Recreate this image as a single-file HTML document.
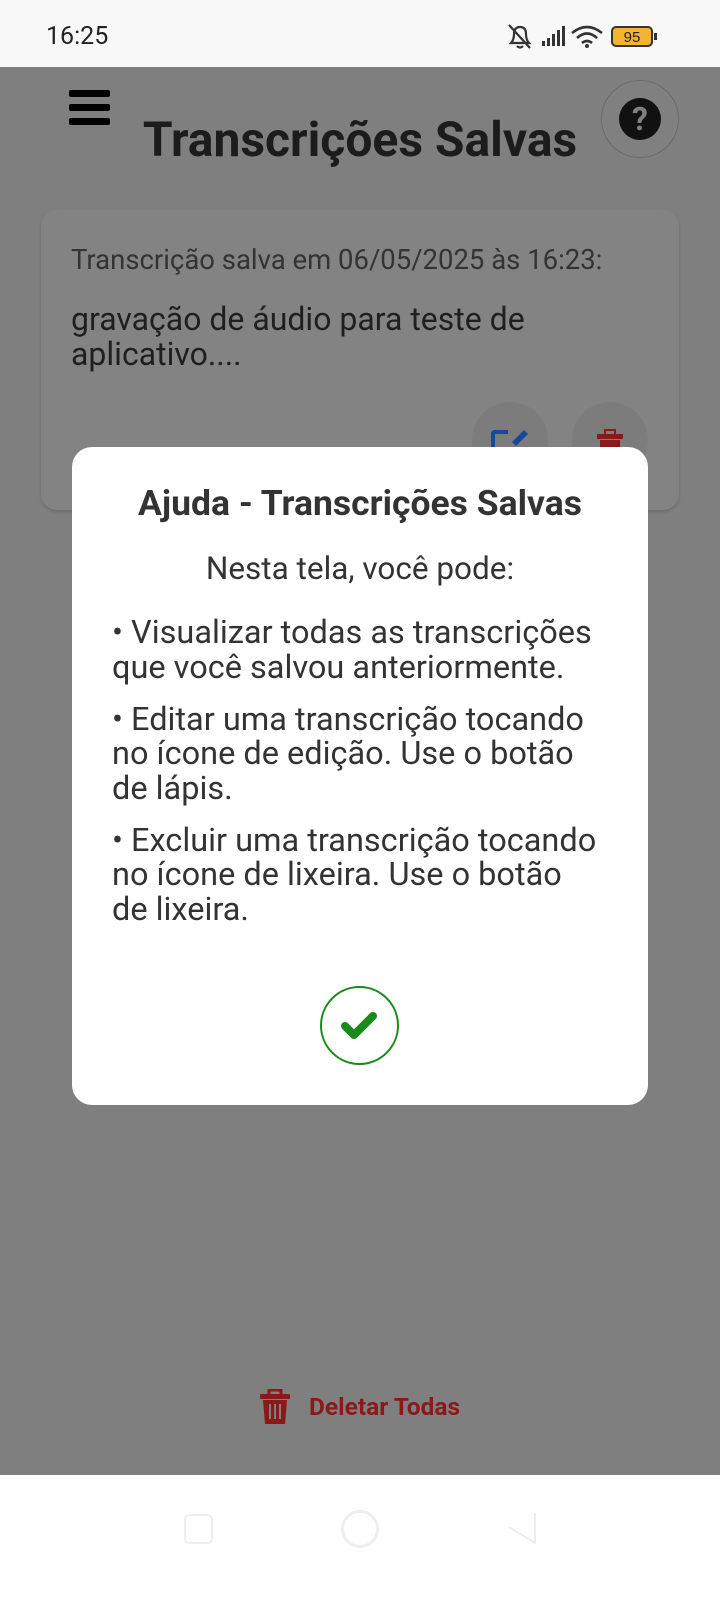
<!DOCTYPE html>
<html><head><meta charset="utf-8"><style>
*{margin:0;padding:0;box-sizing:border-box}
body{width:720px;height:1600px;position:relative;overflow:hidden;background:#7f7f7f;font-family:"Roboto","Liberation Sans",sans-serif;color:#222}
.abs{position:absolute}
.sb{left:0;top:0;width:720px;height:67px;background:#f8f8f8}
.nav{left:0;top:1475px;width:720px;height:125px;background:#fff}
</style></head><body>
<div class="abs sb">
 <div class="abs" style="left:46px;top:22px;font-size:25px;color:#222">16:25</div>
 <svg class="abs" style="left:506px;top:22px" width="170" height="30" viewBox="0 0 170 30">
  <g fill="none" stroke="#333" stroke-width="2.2"><path d="M5 21 Q8 18 8 12 Q8 5 14 5 Q20 5 20 12 Q20 18 23 21 Z"/><path d="M3 3 L24 26"/><path d="M11 24 Q14 27 17 24"/></g>
  <g fill="#333"><rect x="36" y="19" width="3" height="5"/><rect x="41" y="16" width="3" height="8"/><rect x="46" y="12" width="3" height="12"/><rect x="51" y="8" width="3" height="16"/><rect x="56" y="4" width="3" height="20"/></g>
  <g fill="none" stroke="#333" stroke-width="2.6"><path d="M66 11 Q81 -1 96 11"/><path d="M71 16 Q81 7 91 16"/><path d="M76 21 Q81 17 86 21"/></g>
  <circle cx="81" cy="24" r="2" fill="#333"/>
  <rect x="106" y="5" width="40" height="19" rx="4" fill="#f2b530" stroke="#333" stroke-width="2"/>
  <rect x="148" y="11" width="3" height="7" fill="#333"/>
  <text x="126" y="20" font-size="15" text-anchor="middle" fill="#222" font-family="Liberation Sans">95</text>
 </svg>
</div>
<div class="abs" style="left:69px;top:90px;width:41px;height:7px;background:#000;border-radius:2px"></div>
<div class="abs" style="left:69px;top:104px;width:41px;height:7px;background:#000;border-radius:2px"></div>
<div class="abs" style="left:69px;top:118px;width:41px;height:7px;background:#000;border-radius:2px"></div>
<div class="abs" style="left:0;width:720px;top:114px;line-height:52px;text-align:center;font-size:48px;font-weight:bold;color:#1c1c1c">Transcrições Salvas</div>
<div class="abs" style="left:601px;top:80px;width:78px;height:78px;border-radius:50%;border:1.5px solid #6a6a6a;background:#808080"></div>
<div class="abs" style="left:619px;top:98px;width:42px;height:42px;border-radius:50%;background:#111;color:#808080;font-size:32px;font-weight:bold;text-align:center;line-height:42px">?</div>
<div class="abs" style="left:41px;top:210px;width:638px;height:300px;border-radius:16px;background:#838383;box-shadow:0 2px 3px rgba(0,0,0,.15)"></div>
<div class="abs" style="left:71px;top:244px;line-height:32px;font-size:27.5px;color:#333;white-space:nowrap">Transcrição salva em 06/05/2025 às 16:23:</div>
<div class="abs" style="left:71px;top:302px;font-size:32px;color:#1f1f1f;line-height:35px;white-space:nowrap">gravação de áudio para teste de<br>aplicativo....</div>
<div class="abs" style="left:472px;top:402px;width:76px;height:76px;border-radius:50%;background:#7c7c7c"></div>
<div class="abs" style="left:572px;top:402px;width:76px;height:76px;border-radius:50%;background:#7c7c7c"></div>
<svg class="abs" style="left:490px;top:428px" width="40" height="20"><path d="M3 20 V6 Q3 4 5 4 H18" fill="none" stroke="#17489a" stroke-width="4"/><path d="M22 14 L34 2 L38 6 L26 18Z" fill="#17489a"/></svg>
<svg class="abs" style="left:595px;top:428px" width="30" height="20"><rect x="2" y="6" width="26" height="5" fill="#8a1a1a"/><rect x="10" y="2" width="10" height="5" fill="none" stroke="#8a1a1a" stroke-width="2"/><rect x="5" y="12" width="20" height="8" fill="#8a1a1a"/></svg>
<div class="abs" style="left:72px;top:447px;width:576px;height:658px;background:#fff;border-radius:20px"></div>
<div class="abs" style="left:72px;width:576px;top:483px;line-height:40px;text-align:center;font-size:35.5px;font-weight:bold;color:#333;white-space:nowrap">Ajuda - Transcrições Salvas</div>
<div class="abs" style="left:72px;width:576px;top:551px;line-height:36px;text-align:center;font-size:31.5px;color:#333">Nesta tela, você pode:</div>
<div class="abs" style="left:112px;width:485px;top:615px;font-size:32.5px;color:#333;line-height:34.5px">
 <div>• Visualizar todas as transcrições que você salvou anteriormente.</div>
 <div style="margin-top:17.5px">• Editar uma transcrição tocando no ícone de edição. Use o botão de lápis.</div>
 <div style="margin-top:17.5px">• Excluir uma transcrição tocando no ícone de lixeira. Use o botão de lixeira.</div>
</div>
<div class="abs" style="left:320px;top:986px;width:79px;height:79px;border-radius:50%;border:2px solid #1a8a1a"></div>
<svg class="abs" style="left:340px;top:1008px" width="40" height="34"><path d="M5 18 L14 27 L33 8" fill="none" stroke="#1a8a1a" stroke-width="8" stroke-linecap="round" stroke-linejoin="round"/></svg>
<svg class="abs" style="left:260px;top:1389px" width="30" height="36" viewBox="0 0 30 36"><rect x="0" y="5" width="30" height="5" rx="1" fill="#8a1a1a"/><path d="M9 5 V1 H21 V5" fill="none" stroke="#8a1a1a" stroke-width="3"/><path d="M3 11 H27 L25 35 H5Z" fill="#8a1a1a"/><g stroke="#7f7f7f" stroke-width="2"><path d="M10 15 V30 M15 15 V30 M20 15 V30"/></g></svg>
<div class="abs" style="left:309px;top:1392px;line-height:30px;font-size:24.5px;font-weight:bold;color:#8a1a1a;white-space:nowrap">Deletar Todas</div>
<div class="abs nav">
 <div class="abs" style="left:184px;top:39px;width:29px;height:30px;border:2px solid #eee;border-radius:5px"></div>
 <div class="abs" style="left:341px;top:35px;width:38px;height:38px;border:3px solid #eee;border-radius:50%"></div>
 <svg class="abs" style="left:505px;top:36px" width="32" height="36"><path d="M30 2 V32 L4 16" fill="none" stroke="#eee" stroke-width="2"/></svg>
</div>
</body></html>
